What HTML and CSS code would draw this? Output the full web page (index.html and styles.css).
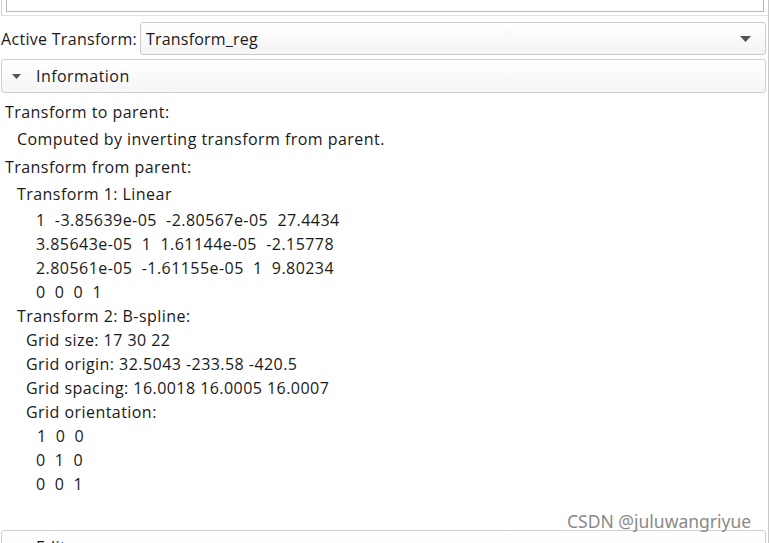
FILE: index.html
```html
<!DOCTYPE html>
<html>
<head>
<meta charset="utf-8">
<link rel="stylesheet" href="styles.css">
</head>
<body>
<div class="page">
  <div class="top-panel"><div class="top-inner"></div></div>
  <div class="active-row">
    <span class="label">Active Transform:</span>
    <div class="combo">
      <span>Transform_reg</span>
      <svg class="combo-arrow" width="11" height="6" viewBox="0 0 11 6"><path d="M0 0H11L5.5 6Z" fill="#555"/></svg>
    </div>
  </div>
  <div class="section-head">
    <svg class="tri" width="9" height="5" viewBox="0 0 9 5"><path d="M0 0H9L4.5 5Z" fill="#555"/></svg>
    <span>Information</span>
  </div>
  <div class="info">
    <div class="l0 big">Transform to parent:</div>
    <div class="l1 big">Computed by inverting transform from parent.</div>
    <div class="l0 big">Transform from parent:</div>
    <div class="l1 big">Transform 1: Linear</div>
    <div class="l3">1&nbsp;&nbsp;-3.85639e-05&nbsp;&nbsp;-2.80567e-05&nbsp;&nbsp;27.4434</div>
    <div class="l3">3.85643e-05&nbsp;&nbsp;1&nbsp;&nbsp;1.61144e-05&nbsp;&nbsp;-2.15778</div>
    <div class="l3">2.80561e-05&nbsp;&nbsp;-1.61155e-05&nbsp;&nbsp;1&nbsp;&nbsp;9.80234</div>
    <div class="l3">0&nbsp;&nbsp;0&nbsp;&nbsp;0&nbsp;&nbsp;1</div>
    <div class="l1">Transform 2: B-spline:</div>
    <div class="l2">Grid size: 17 30 22</div>
    <div class="l2">Grid origin: 32.5043 -233.58 -420.5</div>
    <div class="l2">Grid spacing: 16.0018 16.0005 16.0007</div>
    <div class="l2">Grid orientation:</div>
    <div class="l3 one">1&nbsp;&nbsp;0&nbsp;&nbsp;0</div>
    <div class="l3">0&nbsp;&nbsp;1&nbsp;&nbsp;0</div>
    <div class="l3">0&nbsp;&nbsp;0&nbsp;&nbsp;1</div>
  </div>
  <div class="section-head bottom">
    <svg class="tri" width="9" height="5" viewBox="0 0 9 5"><path d="M0 0H9L4.5 5Z" fill="#555"/></svg>
    <span>Edit...</span>
  </div>
  <div class="watermark">CSDN @juluwangriyue</div>
</div>
</body>
</html>
```
FILE: styles.css
```css
html, body {
  margin: 0;
  padding: 0;
  background: #ffffff;
}
body {
  font-family: "Open Sans", "Noto Sans", sans-serif;
  font-size: 16px;
  letter-spacing: 0.45px;
  color: #1a1a1a;
  overflow: hidden;
}
.page {
  position: relative;
  width: 768px;
  height: 543px;
  border-right: 1px solid #c8c8c8;
  overflow: hidden;
}
.top-panel {
  height: 15px;
  margin-left: 1px;
  border-left: 1px solid #d4d4d4;
  border-bottom: 1px solid #e0e0e0;
  padding-left: 4px;
  padding-right: 4px;
}
.top-inner {
  height: 11px;
  border-left: 1px solid #b8b8b8;
  border-right: 1px solid #b8b8b8;
  border-bottom: 1px solid #b8b8b8;
}
.active-row {
  display: flex;
  align-items: center;
  margin-top: 6px;
  padding-right: 2px;
}
.label {
  padding-left: 1px;
  width: 139px;
  white-space: nowrap;
  letter-spacing: 0.3px;
}
.combo {
  flex: 1;
  height: 31px;
  display: flex;
  align-items: center;
  justify-content: space-between;
  border: 1px solid #cacaca;
  border-radius: 3px;
  background: linear-gradient(#ffffff, #f4f4f4);
  padding: 0 14px 0 5px;
  letter-spacing: 0.2px;
}
.combo-arrow {
  display: block;
}
.section-head {
  display: flex;
  align-items: center;
  height: 32px;
  margin: 4px 2px 0 1px;
  border: 1px solid #cfcfcf;
  border-radius: 3px;
  background: linear-gradient(#ffffff, #f5f5f5);
  font-size: 16px;
}
.section-head .tri {
  margin-left: 10px;
  margin-right: 15px;
}
.info {
  padding-top: 6px;
  height: 431px;
}
.info div {
  white-space: nowrap;
  line-height: 24px;
}
.info .big {
  line-height: 27.3px;
}
.l0 { padding-left: 5px; }
.l1 { padding-left: 17px; }
.l2 { padding-left: 26px; }
.l3 { padding-left: 36px; }
.info .one { padding-left: 37px; }
.section-head.bottom {
  margin-top: 0;
}
.watermark {
  position: absolute;
  left: 567px;
  top: 509px;
  font-family: "Noto Sans", sans-serif;
  font-size: 17.5px;
  letter-spacing: 0;
  color: #8a8a8a;
}
```
